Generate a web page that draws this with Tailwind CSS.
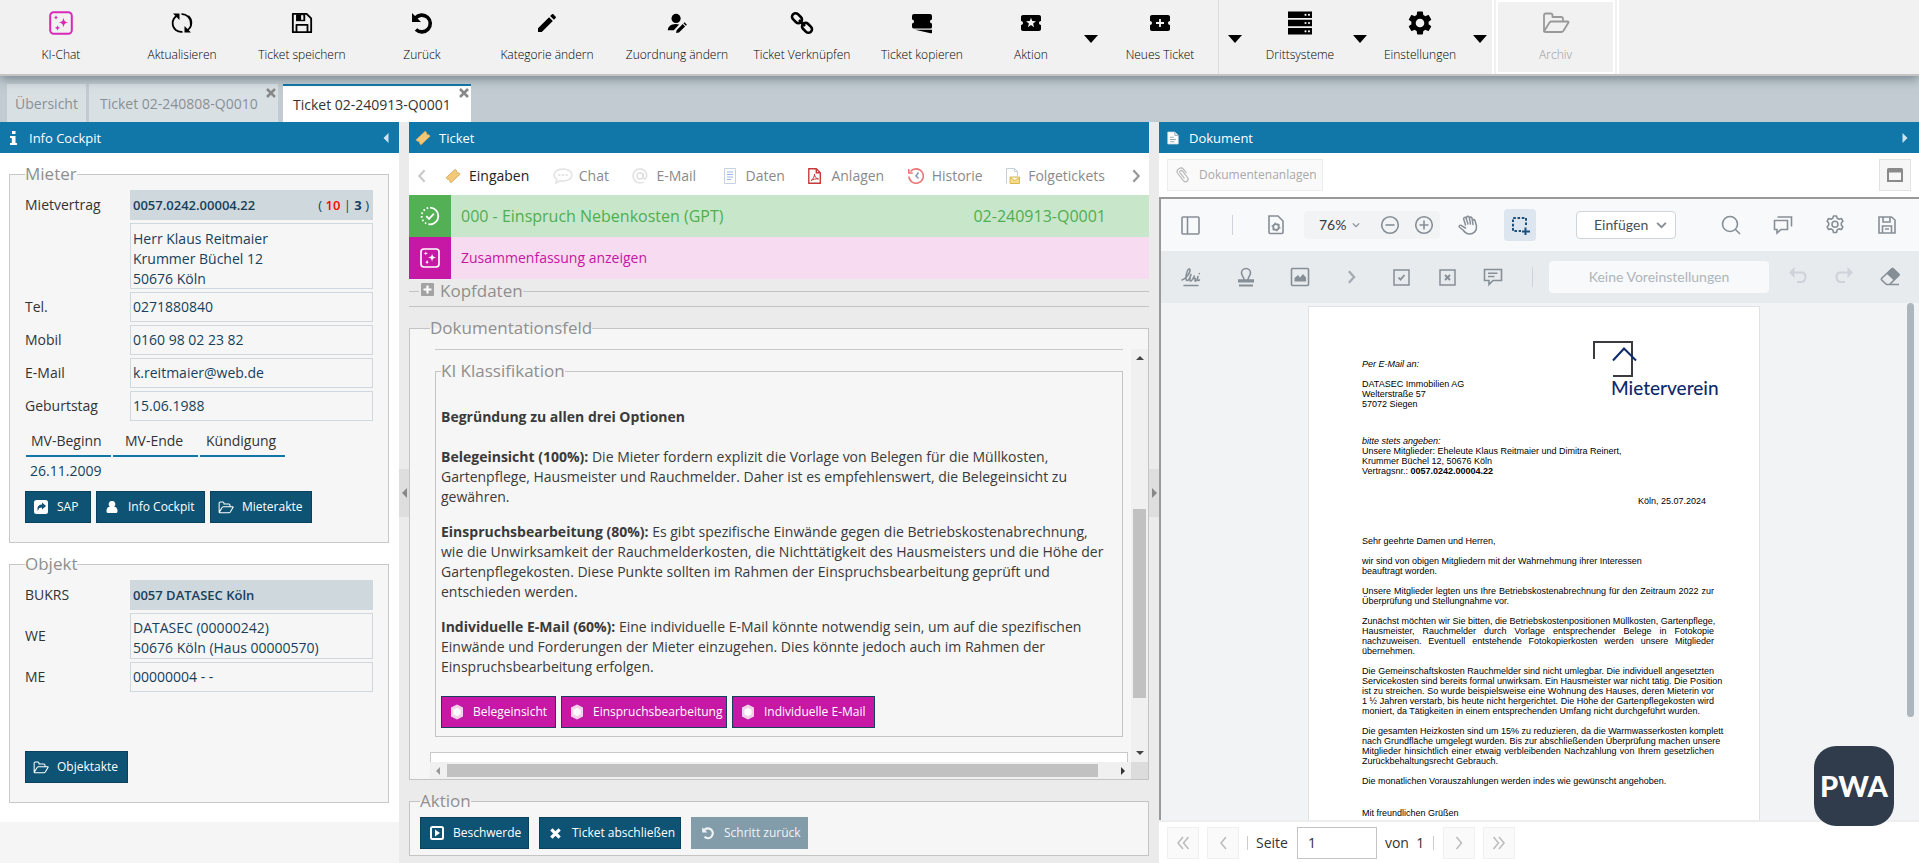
<!DOCTYPE html>
<html lang="de">
<head>
<meta charset="utf-8">
<meta name="viewport" content="width=device-width, initial-scale=1">
<title>Ticket 02-240913-Q0001</title>
<script src="https://cdn.jsdelivr.net/npm/@tailwindcss/browser@4"></script>
</head>
<body class="flex h-screen flex-col overflow-hidden bg-[#ebebeb] font-['Open_Sans','Noto_Sans',sans-serif] text-[14px] leading-5 text-[#333]">

<svg class="hidden" aria-hidden="true">
  <defs>
    <symbol id="i-sparkle" viewBox="0 0 24 24"><rect x="1.2" y="1.2" width="21.6" height="21.6" rx="3.5" fill="none" stroke="currentColor" stroke-width="2"/><path fill="currentColor" d="M14.5 6.5c.6 3.4 1.3 4.300 4.800 5-3.500.7-4.200 1.600-4.800 5-.6-3.400-1.300-4.300-4.800-5 3.500-.7 4.200-1.600 4.800-5zM7 4c.3 1.700.7 2.200 2.500 2.500C7.700 6.800 7.300 7.300 7 9c-.3-1.700-.7-2.200-2.500-2.500C6.300 6.200 6.700 5.700 7 4zM8.500 14c.4 2 .8 2.500 2.900 2.900-2.100.4-2.500.9-2.900 2.900-.4-2-.8-2.500-2.900-2.900 2.100-.4 2.500-.9 2.900-2.900z"/></symbol>
    <symbol id="i-refresh" viewBox="0 0 24 24"><path fill="none" stroke="currentColor" stroke-width="1.800" d="M5.800 19A8.800 8.800 0 0 1 6.500 5M11.500 3.200A8.800 8.800 0 0 1 20.800 12v2M18.200 5A8.800 8.800 0 0 1 17.500 19M12.500 20.800A8.800 8.800 0 0 1 5.800 19" /><path fill="currentColor" d="M3 2.500h6.500V9zM21 21.500h-6.500V15z"/></symbol>
    <symbol id="i-save" viewBox="0 0 24 24"><path fill="none" stroke="currentColor" stroke-width="2" stroke-linejoin="round" d="M2 2h15l5 5v15H2zM6 22v-8h12v8"/><path fill="currentColor" d="M5.500 2.500h10v7.500h-10z"/><path fill="#f1f1f1" d="M11 3.500h2.500v5H11z"/></symbol>
    <symbol id="i-undo" viewBox="0 0 24 24"><path fill="none" stroke="currentColor" stroke-width="3.600" d="M5.500 7A8.400 8.400 0 1 1 6 18.500"/><path fill="currentColor" d="M2 2v9h9z"/></symbol>
    <symbol id="i-pencil" viewBox="0 0 24 24"><path fill="currentColor" d="M3 17.250V21h3.750L17.810 9.940l-3.750-3.750L3 17.250zM20.710 7.040c.39-.39.39-1.020 0-1.410l-2.340-2.340c-.39-.39-1.020-.39-1.410 0l-1.830 1.830 3.750 3.750 1.830-1.830z"/></symbol>
    <symbol id="i-useredit" viewBox="0 0 24 24"><circle cx="11" cy="7" r="5" fill="currentColor"/><path fill="currentColor" d="M2 20c0-4 3.500-7 8.500-7 1.500 0 2.800.2 3.800.6L8.500 20zM11 23l.6-3.200 6.600-6.600 2.600 2.600-6.600 6.600zM19 12.400l1.200-1.200 2.600 2.600-1.200 1.200z"/></symbol>
    <symbol id="i-link" viewBox="0 0 24 24"><g fill="none" stroke="currentColor" stroke-width="2.600"><rect x="1.500" y="3.700" width="11" height="7" rx="3.300" transform="rotate(45 7 7.200)"/><rect x="11.500" y="13.300" width="11" height="7" rx="3.300" transform="rotate(45 17 16.800)"/><path d="M9 9l6 6"/></g></symbol>
    <symbol id="i-copyticket" viewBox="0 0 24 24"><path fill="currentColor" d="M4 3h16a2 2 0 0 1 2 2v3.500a2 2 0 0 0 0 4V16a1.500 1.500 0 0 1-1.500 1.500H4A2 2 0 0 1 2 16v-3.500a2 2 0 0 0 0-4V5a2 2 0 0 1 2-2zM5 18.800h17V22q-1 .5-2.500 0z"/></symbol>
    <symbol id="i-starticket" viewBox="0 0 24 24"><path fill="currentColor" d="M20 12c0-1.100.9-2 2-2V6c0-1.100-.9-2-2-2H4c-1.100 0-1.990.9-1.990 2v4c1.100 0 1.990.9 1.990 2s-.89 2-2 2v4c0 1.100.9 2 2 2h16c1.100 0 2-.9 2-2v-4c-1.100 0-2-.9-2-2zm-4.900 4.200L12 14.100l-3.100 2.100 1-3.600L7 10.300l3.700-.2L12 6.700l1.300 3.400 3.700.2-2.900 2.300z"/></symbol>
    <symbol id="i-plusticket" viewBox="0 0 24 24"><path fill="currentColor" d="M20 12c0-1.100.9-2 2-2V6c0-1.100-.9-2-2-2H4c-1.100 0-1.990.9-1.990 2v4c1.100 0 1.990.9 1.990 2s-.89 2-2 2v4c0 1.100.9 2 2 2h16c1.100 0 2-.9 2-2v-4c-1.100 0-2-.9-2-2zm-4 .9h-3.100V16h-1.800v-3.100H8v-1.800h3.100V8h1.800v3.100H16z"/></symbol>
    <symbol id="i-server" viewBox="0 0 26 24"><path fill="currentColor" d="M1 .5h24v6.500H1zM1 8.700h24v6.500H1zM1 17h24v6.500H1z"/><g fill="#f1f1f1"><circle cx="18.500" cy="3.800" r="1.100"/><circle cx="22" cy="3.800" r="1.100"/><circle cx="18.500" cy="12" r="1.100"/><circle cx="22" cy="12" r="1.100"/><circle cx="18.500" cy="20.300" r="1.100"/><circle cx="22" cy="20.300" r="1.100"/></g></symbol>
    <symbol id="i-gear" viewBox="2 2 20 20"><path fill="currentColor" d="M19.140 12.940c.04-.3.060-.61.060-.94 0-.32-.02-.64-.07-.94l2.030-1.580c.18-.14.230-.41.120-.61l-1.920-3.320c-.12-.22-.37-.29-.59-.22l-2.390.96c-.5-.38-1.030-.7-1.620-.94l-.36-2.540c-.04-.24-.24-.41-.48-.41h-3.840c-.24 0-.43.17-.47.41l-.36 2.540c-.59.240-1.130.570-1.620.94l-2.390-.96c-.22-.08-.47 0-.59.220L2.740 8.870c-.12.210-.08.470.12.610l2.030 1.580c-.05.3-.09.630-.09.940s.02.640.07.940l-2.030 1.580c-.18.140-.23.410-.12.610l1.920 3.320c.12.220.37.290.59.220l2.390-.96c.5.380 1.030.7 1.620.940l.36 2.540c.05.240.24.410.48.410h3.840c.24 0 .44-.17.47-.41l.36-2.540c.59-.24 1.130-.56 1.620-.94l2.390.96c.22.080.47 0 .59-.22l1.920-3.320c.12-.22.07-.47-.12-.61zM12 15.600c-1.980 0-3.600-1.620-3.600-3.600s1.620-3.600 3.600-3.600 3.600 1.620 3.600 3.600-1.620 3.600-3.600 3.600z"/></symbol>
    <symbol id="i-folder" viewBox="0 0 28 22"><path fill="none" stroke="currentColor" stroke-width="1.800" stroke-linejoin="round" d="M2 19V3.500Q2 1.500 4 1.500h4.500q2 0 2 2V5H19q2 0 2 2v2.500M2 19.500l5.500-9q.8-1 2-1h16q1.500 0 .8 1.300l-4.800 8q-.8 1.200-2.300 1.200H3.500q-1.500 0-1.500-1z"/></symbol>
    <symbol id="i-ticket" viewBox="0 0 18 18"><path fill="#f2c879" stroke="#d9a85c" stroke-width="1" d="M11.500 1.500l1.800 1.800a1.500 1.500 0 0 0 2 2l1.700 1.600L6.800 16.500 5 14.800a1.500 1.500 0 0 0-2-2L1.200 11z"/></symbol>
    <symbol id="i-check" viewBox="0 0 24 24"><g fill="none" stroke="currentColor" stroke-width="2.200"><path d="M12 2a10 10 0 0 1 0 20"/><path d="M12 22A10 10 0 0 1 12 2" stroke-dasharray="2 2.500"/><path d="M7.500 12.200l3.300 3.300 6-6.300"/></g></symbol>
    <symbol id="i-gem" viewBox="0 0 16 16"><path fill="#efd3ea" d="M8 .5l6 3v9l-6 3-6-3v-9z"/><path fill="#fff" d="M8 4l3.500 1.800v4.400L8 12l-3.500-1.800V5.800z"/></symbol>
    <symbol id="i-doc" viewBox="0 0 16 18"><path fill="#fff" stroke="#c9d4dc" d="M1 1h9.500L15 5.500V17H1z"/><path fill="none" stroke="#8aa0ae" stroke-width="1.200" d="M10.500 1v4.500H15M4 8h5M4 11h8M4 14h6"/></symbol>
    <symbol id="i-chev" viewBox="0 0 10 16"><path fill="none" stroke="currentColor" stroke-width="2.600" d="M2 1.500L8 8l-6 6.500"/></symbol>
    <symbol id="i-left" viewBox="0 0 6 12"><path fill="currentColor" d="M6 0v12L0 6z"/></symbol>
    <symbol id="i-right" viewBox="0 0 6 12"><path fill="currentColor" d="M0 0v12l6-6z"/></symbol>
    <symbol id="i-down" viewBox="0 0 14 8"><path fill="currentColor" d="M0 0h14L7 8z"/></symbol>
  </defs>
</svg>

<!-- Main toolbar -->
<header class="relative z-10 flex h-[76px] shrink-0 border-b-2 border-[#c4c4c4] bg-[#f1f1f1] text-[12px] leading-4 font-light text-black shadow-[0_3px_10px_rgba(60,75,85,0.55)]">
  <button class="flex w-[122px] flex-col items-center justify-start gap-3 pt-[11px]"><svg class="size-6 text-[#d829b8]"><use href="#i-sparkle"/></svg>KI-Chat</button>
  <button class="flex w-[120px] flex-col items-center justify-start gap-3 pt-[11px]"><svg class="size-6"><use href="#i-refresh"/></svg>Aktualisieren</button>
  <button class="flex w-[120px] flex-col items-center justify-start gap-3 pt-[11px]"><svg class="size-6 p-px"><use href="#i-save"/></svg>Ticket speichern</button>
  <button class="flex w-[120px] flex-col items-center justify-start gap-3 pt-[11px]"><svg class="size-6"><use href="#i-undo"/></svg>Zurück</button>
  <button class="flex w-[130px] flex-col items-center justify-start gap-3 pt-[11px]"><svg class="size-6"><use href="#i-pencil"/></svg>Kategorie ändern</button>
  <button class="flex w-[130px] flex-col items-center justify-start gap-3 pt-[11px]"><svg class="size-6 p-px"><use href="#i-useredit"/></svg>Zuordnung ändern</button>
  <button class="flex w-[120px] flex-col items-center justify-start gap-3 pt-[11px]"><svg class="size-6"><use href="#i-link"/></svg>Ticket Verknüpfen</button>
  <button class="flex w-[120px] flex-col items-center justify-start gap-3 pt-[11px]"><svg class="size-6"><use href="#i-copyticket"/></svg>Ticket kopieren</button>
  <button class="flex w-[98px] flex-col items-center justify-start gap-3 pt-[11px]"><svg class="size-6"><use href="#i-starticket"/></svg>Aktion</button>
  <button class="flex w-[22px] justify-center pt-[35px]" aria-label="Aktion Menü"><svg class="h-2 w-3.5"><use href="#i-down"/></svg></button>
  <button class="flex w-[117px] flex-col items-center justify-start gap-3 border-r border-[#dcdcdc] pt-[11px]"><svg class="size-6"><use href="#i-plusticket"/></svg>Neues Ticket</button>
  <button class="flex w-[31px] justify-center pt-[35px]" aria-label="Neues Ticket Menü"><svg class="h-2 w-3.5"><use href="#i-down"/></svg></button>
  <button class="flex w-[100px] flex-col items-center justify-start gap-3 pt-[11px]"><svg class="h-6 w-[26px]"><use href="#i-server"/></svg>Drittsysteme</button>
  <button class="flex w-[20px] justify-center pt-[35px]" aria-label="Drittsysteme Menü"><svg class="h-2 w-3.5"><use href="#i-down"/></svg></button>
  <button class="flex w-[100px] flex-col items-center justify-start gap-3 pt-[11px]"><svg class="size-6"><use href="#i-gear"/></svg>Einstellungen</button>
  <button class="flex w-[20px] justify-center pt-[35px]" aria-label="Einstellungen Menü"><svg class="h-2 w-3.5"><use href="#i-down"/></svg></button>
  <div class="mx-0.5 flex border-x-2 border-white px-0.5">
    <button disabled class="flex w-[119px] flex-col items-center justify-start gap-3 border-2 border-white pt-[9px] text-[#999]"><svg class="h-6 w-7 py-px"><use href="#i-folder"/></svg>Archiv</button>
  </div>
</header>

<!-- Document tabs -->
<nav class="flex h-[46px] shrink-0 items-end bg-[#c1cbd1] pl-[7px] text-[#8a8f93]">
  <button class="mr-[3px] h-[38px] w-[79px] bg-[#d9e0e4] pt-0.5">Übersicht</button>
  <div class="relative mr-[5px] h-[38px] w-[189px] bg-[#d9e0e4]">
    <button class="h-full pt-0.5 pl-[11px]">Ticket 02-240808-Q0010</button>
    <button class="absolute top-1 right-0.5" aria-label="Tab schließen"><svg class="size-2.5 text-[#888]" viewBox="0 0 10 10"><path d="M1 1l8 8M9 1L1 9" stroke="currentColor" stroke-width="2.500"/></svg></button>
  </div>
  <div class="relative h-[38px] w-[188px] border-t-2 border-[#1176a8] bg-white">
    <button class="h-full pt-0.5 pl-[10px] text-[#333]">Ticket 02-240913-Q0001</button>
    <button class="absolute top-0.5 right-0.5" aria-label="Tab schließen"><svg class="size-2.5 text-[#888]" viewBox="0 0 10 10"><path d="M1 1l8 8M9 1L1 9" stroke="currentColor" stroke-width="2.500"/></svg></button>
  </div>
</nav>

<main class="flex min-h-0 flex-1">

  <!-- Info Cockpit -->
  <aside class="flex w-[399px] shrink-0 flex-col bg-[#f5f5f5]">
    <h2 class="flex h-[31px] shrink-0 items-center bg-[#1176a8] pr-2.5 pl-2.5 text-[13px] text-white">
      <svg class="mr-3 h-3.5 w-[7px]" viewBox="0 0 7 14"><path fill="#fff" d="M2 0h3.500v3H2zM0 5h5.500v7H7v2H0v-2h1.800V7H0z"/></svg>Info Cockpit
      <svg class="ml-auto h-2.5 w-1.5 text-[#cfe4ef]"><use href="#i-left"/></svg>
    </h2>
    <div class="bg-white pt-[9px] pr-2.5 pb-[19px] pl-[9px]">
      <fieldset class="border border-[#c8c8c8] bg-[#f6f6f6] px-[15px] pb-[19px]">
        <legend class="text-[17px] leading-6 text-[#8f8f8f]">Mieter</legend>
        <div class="grid grid-cols-[105px_243px] items-center gap-y-[3px] pt-1">
          <label for="mv">Mietvertrag</label>
          <div class="flex h-[30px] items-center bg-[#cfd8dd] pr-1 pl-[3px] font-semibold text-[#173f5c]">
            <input id="mv" readonly value="0057.0242.00004.22" class="min-w-0 flex-1 text-[13px] outline-none"><span class="text-[13px] font-normal">( <b class="font-semibold text-[#f00]">10</b> | <b>3</b> )</span>
          </div>
          <span></span>
          <textarea readonly rows="3" aria-label="Anschrift" class="h-[66px] resize-none overflow-hidden border border-[#cfd8dd] pt-[5px] pl-0.5 text-[#173f5c] outline-none">Herr Klaus Reitmaier
Krummer Büchel 12
50676 Köln</textarea>
          <label for="tel">Tel.</label><input id="tel" readonly value="0271880840" class="h-[30px] border border-[#cfd8dd] pb-0.5 pl-0.5 text-[#173f5c]">
          <label for="mob">Mobil</label><input id="mob" readonly value="0160 98 02 23 82" class="h-[30px] border border-[#cfd8dd] pb-0.5 pl-0.5 text-[#173f5c]">
          <label for="em">E-Mail</label><input id="em" readonly value="k.reitmaier@web.de" class="h-[30px] border border-[#cfd8dd] pb-0.5 pl-0.5 text-[#173f5c]">
          <label for="geb">Geburtstag</label><input id="geb" readonly value="15.06.1988" class="h-[30px] border border-[#cfd8dd] pb-0.5 pl-0.5 text-[#173f5c]">
        </div>
        <table class="mt-[9px] -ml-px w-[263px] table-fixed border-separate border-spacing-x-0.5 border-spacing-y-0 text-left">
          <thead><tr class="h-[27px]"><th class="border-b-2 border-[#1176a8] pb-1 pl-[5px] font-normal">MV-Beginn</th><th class="border-b-2 border-[#1176a8] pb-1 pl-3 font-normal">MV-Ende</th><th class="border-b-2 border-[#1176a8] pb-1 pl-1.5 font-normal">Kündigung</th></tr></thead>
          <tbody><tr class="h-[27px] text-[#173f5c]"><td class="pl-1">26.11.2009</td><td></td><td></td></tr></tbody>
        </table>
        <div class="mt-[7px] flex gap-[5px] text-[12px] text-white">
          <button class="flex h-8 w-[66px] items-center gap-[9px] border border-[#0a415c] bg-[#0e5373] pl-2"><svg class="size-3.5" viewBox="0 0 14 14"><rect width="14" height="14" rx="2.500" fill="#fff"/><path fill="#0e5373" d="M8 2.500L12 6 8 9.500v-2C5.500 7.500 4.500 8.500 4 11 2.500 8 4 4.600 8 4.500z"/></svg>SAP</button>
          <button class="flex h-8 w-[109px] items-center gap-2.5 border border-[#0a415c] bg-[#0e5373] pl-[9px]"><svg class="size-3" viewBox="0 0 12 13"><path fill="#fff" d="M6 0a3.300 3.300 0 0 1 2.300 5.900C10.500 6.300 12 8 12 11q0 2-2 2H2q-2 0-2-2c0-3 1.500-4.700 3.700-5.100A3.300 3.300 0 0 1 6 0z"/></svg>Info Cockpit</button>
          <button class="flex h-8 w-[102px] items-center gap-2 border border-[#0a415c] bg-[#0e5373] pl-[7px]"><svg class="h-[13px] w-4"><use href="#i-folder"/></svg>Mieterakte</button>
        </div>
      </fieldset>

      <fieldset class="mt-[9px] border border-[#c8c8c8] bg-[#f6f6f6] px-[15px] pb-[19px]">
        <legend class="text-[17px] leading-6 text-[#8f8f8f]">Objekt</legend>
        <div class="grid grid-cols-[105px_243px] items-center gap-y-[3px] pt-1">
          <label for="bk">BUKRS</label><input id="bk" readonly value="0057 DATASEC Köln" class="h-[30px] bg-[#cfd8dd] pl-[3px] text-[13px] font-semibold text-[#173f5c]">
          <label for="we">WE</label>
          <textarea id="we" readonly rows="2" class="h-[46px] resize-none overflow-hidden border border-[#cfd8dd] pt-1 pl-0.5 text-[#173f5c] outline-none">DATASEC (00000242)
50676 Köln (Haus 00000570)</textarea>
          <label for="me">ME</label><input id="me" readonly value="00000004 - -" class="h-[30px] border border-[#cfd8dd] pb-0.5 pl-0.5 text-[#173f5c]">
        </div>
        <button class="mt-[59px] flex h-8 w-[103px] items-center gap-2 border border-[#0a415c] bg-[#0e5373] pl-[7px] text-[12px] text-white"><svg class="h-[13px] w-4"><use href="#i-folder"/></svg>Objektakte</button>
      </fieldset>
    </div>
  </aside>

  <button class="flex w-2.5 shrink-0 items-center justify-center bg-[#ebebeb]" aria-label="Info Cockpit einklappen"><span class="flex h-12 w-full items-center justify-center bg-[#dedede]"><svg class="h-2.5 w-[5px] text-[#888]"><use href="#i-left"/></svg></span></button>

  <!-- Ticket -->
  <section class="flex min-w-0 flex-[740] flex-col pb-[7px]">
    <h2 class="flex h-[31px] shrink-0 items-center gap-2 bg-[#1176a8] pl-1.5 text-[13px] text-white"><svg class="size-4"><use href="#i-ticket"/></svg>Ticket</h2>
    <nav class="flex h-[42px] shrink-0 items-center bg-white px-2 pt-1 text-[#8a8a8a]">
      <button aria-label="Zurück blättern"><svg class="h-3.5 w-2.5 -scale-x-100 text-[#ccc]"><use href="#i-chev"/></svg></button>
      <div class="mr-[26px] ml-[18px] flex flex-1 items-center justify-between">
        <button class="flex items-center gap-2 text-[#222]"><svg class="size-4"><use href="#i-ticket"/></svg>Eingaben</button>
        <button class="flex items-center gap-1.5"><svg class="h-4 w-5" viewBox="0 0 20 16" fill="none" stroke="#e2e2e2" stroke-width="1.500"><path d="M10 1c5 0 9 2.500 9 6s-4 6-9 6c-1 0-2-.1-3-.3L3 15l.8-3.600C2 10.300 1 8.700 1 7c0-3.500 4-6 9-6z"/><path d="M5.500 7h2M9 7h2M12.500 7h2" stroke-width="2"/></svg>Chat</button>
        <button class="flex items-center gap-2"><svg class="size-4" viewBox="0 0 16 16" fill="none" stroke="#e0e0e0" stroke-width="1.500"><circle cx="8" cy="8" r="3"/><path d="M11 5v4.500q.5 1.500 2 1.500c3-1.500 2-10-5-10C-1.500 1-1 15 8 15q2.500 0 4-1"/></svg>E-Mail</button>
        <button class="flex items-center gap-2.5 pl-1"><svg class="h-4 w-3" viewBox="0 0 12 16" fill="none"><path stroke="#c3d3e4" d="M.5.5h11v15H.5z"/><path stroke="#9db8e8" d="M3 4h6M3 6.500h6M3 9h6M3 11.500h4"/></svg>Daten</button>
        <button class="flex items-center gap-2.5"><svg class="h-4 w-[13px]" viewBox="0 0 13 16" fill="none" stroke="#c83a3a"><path stroke-width="1.400" d="M.8.8h7.500l4 4v10.400H.8zM8.300.8v4h4"/><path d="M3 12.500c2-1 3.500-4 3.500-6.500 0 2.500 1.500 4.500 4 5-3-.5-5.500.3-7.500 1.500z"/></svg>Anlagen</button>
        <button class="flex items-center gap-2"><svg class="size-4" viewBox="0 0 16 16" fill="none"><path stroke="#e87777" stroke-width="1.600" d="M2.500 3.500A7.200 7.200 0 1 1 .9 8.500M.8 1v4h4"/><path stroke="#7c93b0" stroke-width="1.400" d="M10.500 4.500L8 8l2.500 2.500"/></svg>Historie</button>
        <button class="flex items-center gap-2"><svg class="h-4 w-3.5" viewBox="0 0 14 16" fill="none"><path stroke="#c5d0d8" d="M.5 15.500V.5h8l3 3v5M8.500.5v3h3"/><path fill="#f7dc85" stroke="#dcb950" d="M4 9h9.500v6.500H4zM4 9.500l4.800 3 4.700-3"/></svg>Folgetickets</button>
      </div>
      <button aria-label="Weiter blättern"><svg class="h-3.5 w-2.5 text-[#999]"><use href="#i-chev"/></svg></button>
    </nav>
    <div class="flex h-[42px] shrink-0 items-center bg-[#c8e6ca] pr-[43px] text-[16px] text-[#4fae50]">
      <span class="mr-2.5 flex size-[42px] items-center justify-center bg-[#54b055] text-white"><svg class="size-5"><use href="#i-check"/></svg></span>
      <span>000 - Einspruch Nebenkosten (GPT)</span><span class="ml-auto">02-240913-Q0001</span>
    </div>
    <button class="flex h-[42px] shrink-0 items-center bg-[#f6dbf1] text-[#c615a2]">
      <span class="mr-2.5 flex size-[42px] items-center justify-center bg-[#c618a5] text-white"><svg class="size-5"><use href="#i-sparkle"/></svg></span>Zusammenfassung anzeigen
    </button>

    <fieldset class="h-7 shrink-0 border-y border-[#c4c4c4] pl-2.5">
      <legend class="flex items-center pl-0.5 text-[17px] leading-6 text-[#8f8f8f]"><button class="mr-1.5 mb-1 block" aria-label="Kopfdaten aufklappen"><svg class="size-[13px]" viewBox="0 0 13 13"><rect width="13" height="13" rx="1" fill="#a3a3a3"/><path d="M6.500 2.500v8M2.500 6.500h8" stroke="#fff" stroke-width="2.200"/></svg></button>Kopfdaten</legend>
    </fieldset>

    <fieldset class="mt-[9px] flex min-h-0 min-w-0 flex-1 flex-col border border-[#c4c4c4] bg-[#f6f6f6] pt-[9px]">
      <legend class="ml-5 text-[17px] leading-6 text-[#8f8f8f]">Dokumentationsfeld</legend>
      <div class="flex min-h-0 flex-1">
        <div class="min-h-0 min-w-0 flex-1 overflow-hidden pr-[3px] pl-5">
          <div class="mr-[5px] ml-[5px] border-t border-[#c8c8c8] pt-[9px]">
            <fieldset class="min-w-0 border border-[#c4c4c4] px-[5px] pb-2 text-[#3a3a3a]">
              <legend class="text-[17px] leading-6 text-[#8f8f8f]">KI Klassifikation</legend>
              <p class="mt-6 font-bold">Begründung zu allen drei Optionen</p>
              <p class="mt-5"><b>Belegeinsicht (100%):</b> Die Mieter fordern explizit die Vorlage von Belegen für die Müllkosten,<br>Gartenpflege, Hausmeister und Rauchmelder. Daher ist es empfehlenswert, die Belegeinsicht zu<br>gewähren.</p>
              <p class="mt-[15px]"><b>Einspruchsbearbeitung (80%):</b> Es gibt spezifische Einwände gegen die Betriebskostenabrechnung,<br>wie die Unwirksamkeit der Rauchmelderkosten, die Nichttätigkeit des Hausmeisters und die Höhe der<br>Gartenpflegekosten. Diese Punkte sollten im Rahmen der Einspruchsbearbeitung geprüft und<br>entschieden werden.</p>
              <p class="mt-[15px]"><b>Individuelle E-Mail (60%):</b> Eine individuelle E-Mail könnte notwendig sein, um auf die spezifischen<br>Einwände und Forderungen der Mieter einzugehen. Dies könnte jedoch auch im Rahmen der<br>Einspruchsbearbeitung erfolgen.</p>
              <div class="mt-[19px] flex gap-[5px] text-[12px] text-white">
                <button class="flex h-8 w-[115px] items-center gap-2 border border-[#173f5c] bg-[#c618a5] pl-[7px]"><svg class="size-4"><use href="#i-gem"/></svg>Belegeinsicht</button>
                <button class="flex h-8 w-[166px] items-center gap-2 border border-[#173f5c] bg-[#c618a5] pl-[7px]"><svg class="size-4"><use href="#i-gem"/></svg>Einspruchsbearbeitung</button>
                <button class="flex h-8 w-[143px] items-center gap-2 border border-[#173f5c] bg-[#c618a5] pl-[7px]"><svg class="size-4"><use href="#i-gem"/></svg>Individuelle E-Mail</button>
              </div>
            </fieldset>
          </div>
          <div class="mt-[15px] h-10 border border-[#c8c8c8] bg-white"></div>
        </div>
        <div class="flex w-[17px] flex-col items-center bg-[#f0f0f0] py-[7px]">
          <svg class="h-1 w-2 -scale-y-100 text-[#444]" viewBox="0 0 14 8" preserveAspectRatio="none"><path fill="currentColor" d="M0 0h14L7 8z"/></svg>
          <div class="mt-[149px] h-[189px] w-[13px] bg-[#c1c1c1]"></div>
          <svg class="mt-auto h-1 w-2 text-[#444]" viewBox="0 0 14 8" preserveAspectRatio="none"><path fill="currentColor" d="M0 0h14L7 8z"/></svg>
        </div>
      </div>
      <div class="ml-5 flex h-[17px] shrink-0">
        <div class="flex flex-1 items-center bg-[#f0f0f0] px-[6px]">
          <svg class="mr-[7px] h-2 w-1 text-[#999]"><use href="#i-left"/></svg>
          <div class="mr-[23px] h-[13px] flex-1 bg-[#c1c1c1]"></div>
          <svg class="h-2 w-1 text-[#333]"><use href="#i-right"/></svg>
        </div>
        <div class="w-[17px] bg-[#dcdcdc]"></div>
      </div>
    </fieldset>

    <fieldset class="mt-[9px] shrink-0 border border-[#c4c4c4] bg-[#f6f6f6] px-2.5 pb-[6px]">
      <legend class="text-[17px] leading-6 text-[#8f8f8f]">Aktion</legend>
      <div class="flex gap-2.5 pt-1 text-[12px] text-white">
        <button class="flex h-8 w-[109px] items-center gap-[9px] border border-[#0a415c] bg-[#0e5373] pl-[9px]"><svg class="size-3.5" viewBox="0 0 14 14"><rect x="1" y="1" width="12" height="12" rx="1.500" fill="none" stroke="#fff" stroke-width="2"/><path fill="#fff" d="M5 3.500v7L10 7z"/></svg>Beschwerde</button>
        <button class="flex h-8 w-[142px] items-center gap-[11px] border border-[#0a415c] bg-[#0e5373] pl-2.5"><svg class="size-[11px]" viewBox="0 0 12 12"><path d="M1.500 1.500l9 9M10.500 1.500l-9 9" stroke="#fff" stroke-width="3.500"/></svg>Ticket abschließen</button>
        <button disabled class="flex h-8 w-[117px] items-center gap-[9px] bg-[#829ca9] pl-2.5 text-[#f0f4f6]"><svg class="size-3.5"><use href="#i-undo"/></svg>Schritt zurück</button>
      </div>
    </fieldset>
  </section>

  <button class="flex w-2.5 shrink-0 items-center justify-center bg-[#ebebeb]" aria-label="Dokument einklappen"><span class="flex h-12 w-full items-center justify-center bg-[#dedede]"><svg class="h-2.5 w-[5px] text-[#888]"><use href="#i-right"/></svg></span></button>

  <!-- Dokument -->
  <section class="relative flex min-w-0 flex-[760] flex-col bg-white">
    <h2 class="flex h-[31px] shrink-0 items-center gap-2.5 bg-[#1176a8] pr-[11px] pl-2 text-[13px] text-white"><svg class="h-3.5 w-3"><use href="#i-doc"/></svg>Dokument<svg class="ml-auto h-2.5 w-1.5 text-[#cfe4ef]"><use href="#i-right"/></svg></h2>
    <div class="flex h-[44px] shrink-0 items-center justify-between px-2">
      <button disabled class="flex h-8 w-[156px] items-center gap-2.5 border border-[#ececec] bg-[#fafafa] pl-2 text-[12px] text-[#a9a9a9]"><svg class="h-4 w-[13px]" viewBox="0 0 13 16" fill="none" stroke="#b5b5b5" stroke-width="1.200"><path d="M10.500 6L7.200 1.800C5.500-.2 0 2 1.200 5.500l6 8c2.300 3 6.300 0 4.300-3L6.500 4C5 2.500 3 4 4 5.500l4.500 6"/></svg>Dokumentenanlagen</button>
      <button class="flex size-8 items-center justify-center border border-[#e2e2e2] bg-[#f6f6f6]" aria-label="Vollbild"><svg class="h-3.5 w-4" viewBox="0 0 16 14"><path fill="#8a8a8a" d="M1.500 0h13Q16 0 16 1.500V14H0V1.500Q0 0 1.500 0zM2 4.500V12h12V4.500z"/></svg></button>
    </div>

    <div class="flex min-h-0 flex-1 flex-col border-t-2 border-l-2 border-[#999] bg-[#f1f3f5] font-['Lato',sans-serif]">
      <div class="flex h-[52px] shrink-0 items-center bg-[#f8f9fb] pl-[20px] text-[#868e96]">
        <button aria-label="Seitenleiste"><svg class="block h-[19px] w-5" viewBox="0 0 20 19" fill="none" stroke="currentColor" stroke-width="1.600"><rect x="1" y="1" width="17" height="17" rx="1"/><path d="M6.500 1v17"/></svg></button>
        <span class="mr-[33px] ml-[31px] h-5 w-px bg-[#cfd4da]"></span>
        <button aria-label="Seiteneinstellungen"><svg class="block size-5" viewBox="0 0 20 20" fill="none" stroke="currentColor" stroke-width="1.600"><path d="M3 1h9l5 5v11.500q0 1-1 1H4q-1 0-1-1z"/><circle cx="10" cy="12" r="2.800" stroke-width="1.800"/><circle cx="10" cy="12" r="3.900" stroke-width="1.200" stroke-dasharray="1.500 2.580"/></svg></button>
        <div class="ml-[18px] flex h-7 w-[136px] items-center rounded bg-[#f1f3f5] pr-1.5 pl-[15px]">
          <button class="flex items-center gap-1.5 text-[14px] text-[#343a40]">76%<svg class="h-1.5 w-2" viewBox="0 0 10 6" fill="none" stroke="#868e96" stroke-width="1.500"><path d="M1 1l4 4 4-4"/></svg></button>
          <button class="ml-auto" aria-label="Verkleinern"><svg class="block size-5" viewBox="0 0 20 20" fill="none" stroke="currentColor" stroke-width="1.600"><circle cx="10" cy="10" r="8.300"/><path d="M5.500 10h9"/></svg></button>
          <button class="ml-3.5" aria-label="Vergrößern"><svg class="block size-5" viewBox="0 0 20 20" fill="none" stroke="currentColor" stroke-width="1.600"><circle cx="10" cy="10" r="8.300"/><path d="M5.500 10h9M10 5.500v9"/></svg></button>
        </div>
        <button class="ml-[18px]" aria-label="Verschieben"><svg class="block size-5" viewBox="0 0 20 20" fill="none" stroke="currentColor" stroke-width="1.500" stroke-linecap="round" stroke-linejoin="round"><path d="M7.500 10L5.500 3.500Q6.500 1.500 8 3l2 6M8.500 4V2q1.300-1.700 2.700 0L12.500 9M11.500 2.500q1.500-1 2.500.5l1 6.500M14.300 5q1.500-1 2.700.5l1.500 5.500c.5 5-3 8-7 8-3.500 0-5-2-6.500-4L1.200 12Q1 10 3 10.300L7.500 13"/></svg></button>
        <button class="ml-[26px] flex size-8 items-center justify-center rounded bg-[#dde5ee]" aria-label="Auswählen"><svg class="size-[19px]" viewBox="0 0 19 19" fill="none" stroke="#1c4f7c" stroke-width="2"><path d="M15 9V2H2v13h8" stroke-dasharray="2.600 1.700"/><path d="M14.500 11.500V19M11 15.500h8"/></svg></button>
        <button class="ml-10 flex h-7 w-[100px] items-center justify-between rounded border border-[#cfd4da] bg-white pr-2 pl-[17px] text-[14px] text-[#485056]">Einfügen<svg class="h-[7px] w-[11px]" viewBox="0 0 12 8" fill="none" stroke="#868e96" stroke-width="2.200"><path d="M1 1l5 5 5-5"/></svg></button>
        <div class="mr-[22px] ml-auto flex gap-8">
          <button aria-label="Suchen"><svg class="block size-5" viewBox="0 0 20 20" fill="none" stroke="currentColor" stroke-width="1.600"><circle cx="9" cy="9" r="7.500"/><path d="M14.500 14.500l4.500 4.500"/></svg></button>
          <button aria-label="Kommentare"><svg class="block size-5" viewBox="0 0 20 20" fill="none" stroke="currentColor" stroke-width="1.600"><path d="M1.500 5.500h13v9H8L4 18v-3.500H1.500zM4.500 2H18.500v9.500"/></svg></button>
          <button aria-label="Optionen"><svg class="block size-5" viewBox="0 0 20 20" fill="none" stroke="currentColor" stroke-width="1.600" stroke-linejoin="round"><path d="M8.500 1h3l.7 2.300 1.800 1 2.400-.8 1.500 2.700-1.600 1.800v2l1.600 1.900-1.500 2.600-2.400-.6-1.800 1-.7 2.600h-3l-.7-2.600-1.800-1-2.400.6-1.500-2.600L3.700 10V8L2.100 6.200l1.500-2.700 2.400.8 1.800-1z"/><circle cx="10" cy="9.200" r="3"/></svg></button>
          <button aria-label="Speichern"><svg class="block size-5" viewBox="0 0 20 20" fill="none" stroke="currentColor" stroke-width="1.600"><path d="M2 2h12.500L18 5v13H2zM5.500 18v-7h9v7M6 2v5h7V2M8 14h4"/></svg></button>
        </div>
      </div>
      <div class="flex h-[52px] shrink-0 items-center bg-[#e7ebee] pl-[20px] text-[#868e96]">
        <button aria-label="Unterschrift"><svg class="block size-5" viewBox="0 0 20 20" fill="none" stroke="currentColor" stroke-width="1.500" stroke-linecap="round" stroke-linejoin="round"><path d="M3 18.500h14M1 13C4.500 12 9.500 6 9 2.500 7.500-.5 4.500 7 5 12c.8 3.500 3.500 1 5-4.500-1.500 4-1.500 7 0 6.500 1.500-1 2.500-3 3.300-5-.5 2-.5 3 1.200 2.500-.8 1.500-.8 3.500.5 2.500s1.500-3 2-4.500c-.8 3-.8 5 1.500 3.500M18.300 6.500v.2"/></svg></button>
        <button class="ml-[35px]" aria-label="Stempel"><svg class="block size-5" viewBox="0 0 20 20" fill="none" stroke="currentColor" stroke-width="1.600"><path d="M8 13c.3-3-2.500-4-2.500-7a4.500 4.500 0 0 1 9 0c0 3-2.800 4-2.500 7"/><path d="M3 14.500h14v-1.200H3zM3 18.500h14" stroke-width="2"/></svg></button>
        <button class="ml-[34px]" aria-label="Bild"><svg class="block size-5" viewBox="0 0 20 20" fill="none" stroke="currentColor" stroke-width="1.600"><rect x="1.500" y="1.500" width="17" height="17" rx="1"/><path fill="currentColor" stroke="none" d="M4.500 14.500V11L8 8l2 2.500L13 7l3 3.500v4z"/></svg></button>
        <button class="ml-[37px]" aria-label="Mehr"><svg class="block h-[14px] w-[9px] text-[#a3abb2]"><use href="#i-chev"/></svg></button>
        <button class="ml-[37px]" aria-label="Haken"><svg class="block size-[17px]" viewBox="0 0 17 17" fill="none" stroke="currentColor" stroke-width="1.500"><rect x="1" y="1" width="15" height="15"/><path d="M5.500 8.500l2 2.200 4-4.700" stroke-width="1.800"/></svg></button>
        <button class="ml-[29px]" aria-label="Kreuz"><svg class="block size-[17px]" viewBox="0 0 17 17" fill="none" stroke="currentColor" stroke-width="1.500"><rect x="1" y="1" width="15" height="15"/><path d="M6 6l5 5M11 6l-5 5" stroke-width="1.900"/></svg></button>
        <button class="ml-[27px]" aria-label="Notiz"><svg class="block size-5" viewBox="0 0 20 20" fill="none" stroke="currentColor" stroke-width="1.600"><path d="M1.500 2.500h17v11H10L6 17.500v-4H1.500zM5 6.200h9.500M5 9.500h6.500"/></svg></button>
        <span class="mr-4 ml-[29px] h-5 w-px bg-[#cfd4da]"></span>
        <button disabled class="h-8 w-[220px] rounded bg-[#f8f9fa] text-[14px] text-[#adb5bd]">Keine Voreinstellungen</button>
        <div class="mr-[19px] ml-auto flex items-center">
          <button disabled aria-label="Rückgängig"><svg class="block size-5 text-[#cdd3d8]" viewBox="0 0 20 20" fill="none" stroke="currentColor" stroke-width="2"><path d="M4 5.500h9.500q4 0 4 4.500t-4 5H9"/><path fill="currentColor" stroke="none" d="M6.500 0v11L1 5.500z"/></svg></button>
          <button disabled class="ml-[26px]" aria-label="Wiederholen"><svg class="block size-5 -scale-x-100 text-[#cdd3d8]" viewBox="0 0 20 20" fill="none" stroke="currentColor" stroke-width="2"><path d="M4 5.500h9.500q4 0 4 4.500t-4 5H9"/><path fill="currentColor" stroke="none" d="M6.500 0v11L1 5.500z"/></svg></button>
          <button class="ml-[26px]" aria-label="Radierer"><svg class="block size-5" viewBox="0 0 20 20" fill="none" stroke="currentColor" stroke-width="1.600"><path d="M8 17.500h11M8 17.500H6.500L1.700 13Q1 12 2 11l9.500-9q1-.8 2 0l5 5q.7.900 0 1.700L9.500 17.500z"/><path fill="currentColor" d="M12.500 1.500l6.500 6-5 5-6.500-6z"/></svg></button>
        </div>
      </div>

      <div class="flex min-h-0 flex-1">
        <div class="flex min-w-0 flex-1 justify-center overflow-hidden pt-[3px]">
          <article class="h-[640px] w-[452px] shrink-0 border border-[#dfe2e5] bg-white pt-[33px] pr-[53px] pl-[53px] font-['Liberation_Sans',sans-serif] text-[9px] leading-[10px] whitespace-nowrap text-black">
            <div class="flex justify-between">
              <div class="pt-[19px]"><p class="italic">Per E-Mail an:</p><p class="mt-2.5">DATASEC Immobilien AG<br>Welterstraße 57<br>57072 Siegen</p></div>
              <div class="-mr-3.5 w-[128px]">
                <svg class="h-[38px] w-[46px]" viewBox="0 0 46 38" fill="none"><path stroke="#3a3a40" stroke-width="2" d="M2 19V2h38v34H21"/><path stroke="#0d2a6b" stroke-width="2" d="M21 20.500L32 8.500l12 12"/></svg>
                <p class="pl-[19px] font-['Lato',sans-serif] text-[19px] leading-5 font-medium text-[#0d2a6b]">Mieterverein</p>
              </div>
            </div>
            <div class="mt-[27px]"><p class="italic">bitte stets angeben:</p><p>Unsere Mitglieder: Eheleute Klaus Reitmaier und Dimitra Reinert,<br>Krummer Büchel 12, 50676 Köln<br>Vertragsnr.: <b>0057.0242.00004.22</b></p></div>
            <p class="mt-5 text-right">Köln, 25.07.2024</p>
            <p class="mt-[30px]">Sehr geehrte Damen und Herren,</p>
            <p class="mt-2.5">wir sind von obigen Mitgliedern mit der Wahrnehmung ihrer Interessen<br>beauftragt worden.</p>
            <div class="-mr-2 mt-2.5 text-justify">
              <p class="[text-align-last:justify]">Unsere Mitglieder legten uns Ihre Betriebskostenabrechnung für den Zeitraum 2022 zur</p><p>Überprüfung und Stellungnahme vor.</p>
              <p class="mt-2.5 [text-align-last:justify]">Zunächst möchten wir Sie bitten, die Betriebskostenpositionen Müllkosten, Gartenpflege,<br>Hausmeister, Rauchmelder durch Vorlage entsprechender Belege in Fotokopie<br>nachzuweisen. Eventuell entstehende Fotokopierkosten werden unsere Mitglieder</p><p>übernehmen.</p>
              <p class="mt-2.5 [text-align-last:justify]">Die Gemeinschaftskosten Rauchmelder sind nicht umlegbar. Die individuell angesetzten<br>Servicekosten sind bereits formal unwirksam. Ein Hausmeister war nicht tätig. Die Position<br>ist zu streichen. So wurde beispielsweise eine Wohnung des Hauses, deren Mieterin vor<br>1 ½ Jahren verstarb, bis heute nicht hergerichtet. Die Höhe der Gartenpflegekosten wird</p><p>moniert, da Tätigkeiten in einem entsprechenden Umfang nicht durchgeführt wurden.</p>
              <p class="mt-2.5 [text-align-last:justify]">Die gesamten Heizkosten sind um 15% zu reduzieren, da die Warmwasserkosten komplett<br>nach Grundfläche umgelegt wurden. Bis zur abschließenden Überprüfung machen unsere<br>Mitglieder hinsichtlich einer etwaig verbleibenden Nachzahlung von Ihrem gesetzlichen</p><p>Zurückbehaltungsrecht Gebrauch.</p>
            </div>
            <p class="mt-2.5">Die monatlichen Vorauszahlungen werden indes wie gewünscht angehoben.</p>
            <p class="mt-[22px]">Mit freundlichen Grüßen</p>
          </article>
        </div>
        <div class="w-3 shrink-0"><div class="h-[414px] w-[7px] rounded-full bg-[#adb5bd]"></div></div>
      </div>
    </div>

    <div class="flex h-[43px] shrink-0 items-center border-t-2 border-[#eee] pl-2">
      <button disabled class="flex size-8 items-center justify-center border border-[#f0f0f0] bg-[#fafafa]" aria-label="Erste Seite"><svg class="size-3.5" viewBox="0 0 14 14" fill="none" stroke="#bbb" stroke-width="1.500"><path d="M7 1L2 7l5 6M12.500 1l-5 6 5 6"/></svg></button>
      <button disabled class="ml-2 flex size-8 items-center justify-center border border-[#f0f0f0] bg-[#fafafa]" aria-label="Vorherige Seite"><svg class="size-3.5" viewBox="0 0 14 14" fill="none" stroke="#bbb" stroke-width="1.500"><path d="M10 1L5 7l5 6"/></svg></button>
      <span class="mr-2 ml-2 h-3.5 w-px bg-[#ccc]"></span>
      <label for="page">Seite</label>
      <input id="page" value="1" class="ml-[9px] h-8 w-20 border border-[#c4c4c4] pl-2.5">
      <span class="ml-2">von&nbsp; 1</span>
      <span class="mr-[9px] ml-[9px] h-3.5 w-px bg-[#ccc]"></span>
      <button disabled class="flex size-8 items-center justify-center border border-[#f0f0f0] bg-[#fafafa]" aria-label="Nächste Seite"><svg class="size-3.5" viewBox="0 0 14 14" fill="none" stroke="#bbb" stroke-width="1.500"><path d="M4.500 1l5 6-5 6"/></svg></button>
      <button disabled class="ml-2 flex size-8 items-center justify-center border border-[#f0f0f0] bg-[#fafafa]" aria-label="Letzte Seite"><svg class="size-3.5" viewBox="0 0 14 14" fill="none" stroke="#bbb" stroke-width="1.500"><path d="M1.500 1l5 6-5 6M7 1l5 6-5 6"/></svg></button>
    </div>

    <button class="absolute right-[25px] bottom-[37px] flex size-20 items-center justify-center rounded-[22px] bg-[#303c4c] font-['Lato',sans-serif] text-[29px] font-black text-white">PWA</button>
  </section>
</main>
</body>
</html>
